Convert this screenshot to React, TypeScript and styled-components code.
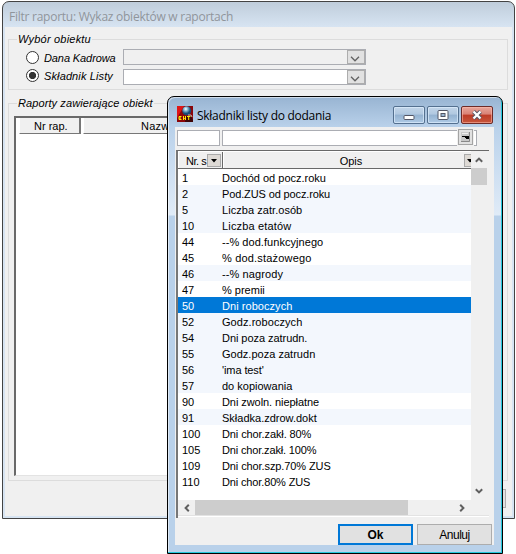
import React from "react";
import styled, { createGlobalStyle } from "styled-components";

const Global = createGlobalStyle`
  * { box-sizing: border-box; }
  body { margin: 0; background: #fff; overflow: hidden; }
  #root { font: 11px/16px "Liberation Sans", Arial, sans-serif; color: #000; }
`;

const Desktop = styled.main`
  position: relative;
  width: 516px;
  height: 554px;
  padding: 1px 0 0 2px;
  background: #fff;
  white-space: nowrap;
`;

const BackWindow = styled.section`
  width: 513px;
  height: 518px;
  border: 1px solid #434343;
  border-radius: 7px 7px 0 0;
  background: linear-gradient(#bfcddb 0, #d7e4f2 25px, #d7e4f2 100%);
  padding: 0 2px 2px;
  display: flex;
  flex-direction: column;
`;

const BackTitle = styled.header`
  height: 25px;
  padding: 2px 0 0 4px;
  font: 12px/25px "Open Sans", sans-serif;
  letter-spacing: -0.25px;
  color: #90959b;
`;

const BackBody = styled.div`
  flex: 1;
  min-height: 0;
  background: #f0f0f0;
  padding: 12px 4px 0 3px;
  display: flex;
  flex-direction: column;
`;

const Group = styled.fieldset<{ $height: number; $gap: number }>`
  margin: 0 0 ${(p) => p.$gap}px;
  padding: 9px 0 0 5px;
  min-width: 0;
  height: ${(p) => p.$height}px;
  border: 1px solid #dcdcdc;
`;

const Legend = styled.div<{ $spacing: number }>`
  width: fit-content;
  height: 16px;
  margin: -18px 0 0 3px;
  padding: 0 1px;
  background: #f0f0f0;
  font-style: italic;
  line-height: 16px;
  letter-spacing: ${(p) => p.$spacing}px;
`;

const OptionRow = styled.label`
  display: flex;
  align-items: center;
  height: 18px;
  margin-bottom: 2px;
  padding-left: 12px;
`;

const Options = styled.div`
  padding-top: 1px;
`;

const Radio = styled.span<{ $on?: boolean }>`
  width: 13px;
  height: 13px;
  margin-top: ${(p) => (p.$on ? -3 : 1)}px;
  border: 1px solid #333;
  border-radius: 50%;
  background: ${(p) => (p.$on ? "radial-gradient(circle, #333 0 3.2px, #fff 4px)" : "#fff")};
`;

const OptionText = styled.span<{ $spacing: number; $lift: number }>`
  width: 79px;
  margin: 0 0 ${(p) => p.$lift}px 5px;
  font-style: italic;
  letter-spacing: ${(p) => p.$spacing}px;
`;

const Combo = styled.span<{ $disabled?: boolean }>`
  display: flex;
  justify-content: flex-end;
  width: 243px;
  height: 16px;
  border: 1px solid #abadb3;
  background: ${(p) => (p.$disabled ? "#f0f0f0" : "#fff")};
`;

const ComboButton = styled.span`
  display: flex;
  align-items: center;
  justify-content: center;
  width: 18px;
  height: 14px;
  padding: 3px 2px 0 0;
  border: 1px solid #adadad;
  background: #e1e1e1;
`;

const ReportTable = styled.div`
  width: 489px;
  height: 360px;
  margin-top: 5px;
  border-top: 2px solid #696969;
  border-left: 2px solid #696969;
  border-bottom: 1px solid #e3e3e3;
  background: #fff;
`;

const ReportHeader = styled.div`
  display: flex;
  gap: 2px;
  height: 16px;
  padding-left: 3px;
`;

const ReportCell = styled.div<{ $width: number; $indent: number; $spacing: number }>`
  width: ${(p) => p.$width}px;
  padding-left: ${(p) => p.$indent}px;
  border: 1px solid #777;
  border-width: 0 2px 1px 1px;
  border-left-color: #fff;
  background: #f0f0f0;
  letter-spacing: ${(p) => p.$spacing}px;
`;

const BackButton = styled.span`
  align-self: flex-end;
  width: 75px;
  height: 19px;
  margin: 8px 2px 0 0;
  border: 1px solid #adadad;
  background: #e1e1e1;
`;

const Modal = styled.section`
  position: absolute;
  left: 167px;
  top: 96px;
  width: 336px;
  height: 458px;
  border: 1px solid #000;
  border-radius: 7px 7px 0 0;
  background: linear-gradient(#98b4d2 0, #b9d1ea 30px, #c6daef 58px, #e0ebf7 118px, #b9d1ea 119px);
  box-shadow: inset -1px -1px 0 #24c8dc, inset 1px 1px 0 rgba(255, 255, 255, 0.55);
  padding: 1px 8px 8px 7px;
  display: flex;
  flex-direction: column;
`;

const ModalTitle = styled.header`
  display: flex;
  align-items: flex-start;
  height: 29px;
  padding: 8px 1px 0 2px;
`;

const ModalName = styled.h1`
  flex: 1;
  margin: 0;
  padding: 1px 0 0 4px;
  font: 12px/17px "Open Sans", sans-serif;
  letter-spacing: -0.27px;
`;

const Caption = styled.span<{ $close?: boolean }>`
  display: flex;
  align-items: center;
  justify-content: center;
  width: 32px;
  height: 18px;
  margin-left: 2px;
  border: 1px solid ${(p) => (p.$close ? "#6d2b28" : "#54708f")};
  border-radius: 2px;
  background: ${(p) =>
    p.$close
      ? "linear-gradient(#e8a69b 0, #d98175 45%, #bd3a26 50%, #c7573d 100%)"
      : "linear-gradient(#c2d5e9 0, #b0c8e0 45%, #94b2d1 50%, #aecae5 100%)"};
  box-shadow: inset 0 0 0 1px ${(p) => (p.$close ? "rgba(255,190,175,.55)" : "rgba(225,240,255,.65)")};
`;

const ModalBody = styled.div`
  flex: 1;
  min-height: 0;
  background: #f0f0f0;
  padding: 3px 5px 0 1px;
`;

const Filters = styled.div`
  display: flex;
  height: 20px;
  padding-left: 1px;
`;

const FilterInput = styled.span<{ $width: number }>`
  display: flex;
  justify-content: flex-end;
  width: ${(p) => p.$width}px;
  height: 16px;
  margin-right: 2px;
  border: 1px solid #abadb3;
  background: #fff;
`;

const FilterButton = styled.span`
  width: 15px;
  height: 16px;
  margin: -2px 3px 0 0;
  border: 1px solid #a4a4a4;
  background: #e1e1e1;
  box-shadow: 0 0 0 1px #f0f0f0;
`;

const List = styled.div`
  width: 313px;
  height: 368px;
  border: solid #696969;
  border-width: 1px 0 0 2px;
  border-color: #696969 #e3e3e3 #e3e3e3 #777;
`;

const Upper = styled.div`
  display: grid;
  grid-template-columns: 293px 16px;
  height: 349px;
`;

const Rows = styled.div`
  background: #fff;
  overflow: hidden;
`;

const ListHeader = styled.div`
  display: flex;
  height: 18px;
  border-top: 1px solid #fff;
  border-bottom: 1px solid #696969;
  background: #f0f0f0;
`;

const HeadCell = styled.div<{ $grow?: boolean }>`
  display: flex;
  ${(p) => (p.$grow ? "flex: 1; padding-left: 14px;" : "width: 45px; padding-left: 7px;")}
  border-left: 1px solid #fff;
  border-right: ${(p) => (p.$grow ? "0" : "1px solid #696969")};
  line-height: 18px;
`;

const HeadText = styled.span<{ $grow?: boolean }>`
  ${(p) => (p.$grow ? "flex: 1; text-align: center;" : "width: 21px; letter-spacing: -0.45px;")}
`;

const DropButton = styled.span<{ $cut?: boolean }>`
  display: flex;
  flex: none;
  align-items: center;
  justify-content: ${(p) => (p.$cut ? "flex-start" : "center")};
  overflow: hidden;
  width: ${(p) => (p.$cut ? 7 : 14)}px;
  height: 13px;
  margin-top: 2px;
  padding-left: ${(p) => (p.$cut ? 2 : 0)}px;
  border: 1px solid #aaa;
  border-right-width: ${(p) => (p.$cut ? 0 : 1)}px;
  background: #dedad5;
`;

const Row = styled.div<{ $tone: string }>`
  display: grid;
  grid-template-columns: 40px 1fr;
  height: 16px;
  padding-left: 4px;
  line-height: 18px;
  background: ${(p) => ({ w: "#fff", b: "#f3f7fd", s: "#0078d7" })[p.$tone]};
  color: ${(p) => (p.$tone === "s" ? "#fff" : "#000")};
`;

const Cell = styled.span<{ $spacing?: number }>`
  letter-spacing: ${(p) => p.$spacing ?? 0}px;
`;

const VScroll = styled.div`
  display: flex;
  flex-direction: column;
  align-items: center;
  justify-content: space-between;
  padding: 5px 0;
  background: linear-gradient(#f0f0f0 17px, #cdcdcd 17px 34px, #f0f0f0 34px);
`;

const HScroll = styled.div`
  display: flex;
  align-items: center;
  justify-content: space-between;
  width: 293px;
  height: 15px;
  padding: 0 5px;
  background: linear-gradient(90deg, #f0f0f0 17px, #cdcdcd 17px 230px, #f0f0f0 230px);
`;

const ListEdge = styled.div`
  width: 311px;
  height: 2px;
  border-top: 1px solid #e3e3e3;
  background: #fff;
`;

const Actions = styled.footer`
  display: flex;
  justify-content: flex-end;
  gap: 4px;
  padding: 6px 0 0;
  margin-right: -3px;
`;

const Button = styled.button<{ $primary?: boolean }>`
  width: 75px;
  height: 21px;
  padding: 1px 0 0;
  border: ${(p) => (p.$primary ? "2px solid #0078d7" : "1px solid #adadad")};
  background: #e1e1e1;
  color: #000;
  font: ${(p) => (p.$primary ? "bold 12px" : "12px")}/16px "Liberation Sans", Arial, sans-serif;
  letter-spacing: ${(p) => (p.$primary ? 0 : -0.5)}px;
`;

const Chevron = ({ turn = 0, wide = 8, weight = 2 }) => (
  <svg width={wide} height={wide} viewBox="0 0 8 8" fill="none" stroke="#606060" strokeWidth={weight}>
    <path d="M0.8 2.2 4 5.4 7.2 2.2" transform={`rotate(${turn} 4 4)`} />
  </svg>
);

const Triangle = styled.svg`
  flex: none;
`;

const Arrow = () => (
  <Triangle width="6" height="4">
    <path d="M0 0h6L3 3.5z" fill="#000" />
  </Triangle>
);

const AppIcon = () => (
  <svg width="16" height="16" viewBox="0 0 16 16">
    <defs>
      <radialGradient id="globe" cx="40%" cy="30%">
        <stop offset="0" stopColor="#fff" />
        <stop offset=".45" stopColor="#83b6d2" />
        <stop offset="1" stopColor="#174a75" />
      </radialGradient>
    </defs>
    <rect width="16" height="16" fill="#8c0508" />
    <path d="M0 0h7L0 12z" fill="#df1616" />
    <path d="M9 10h5l2 4v2H8z" fill="#3d0508" />
    <circle cx="9.7" cy="4.8" r="4.5" fill="url(#globe)" />
    <path d="M11 9h3l1 2" stroke="#bbb" fill="none" />
    <path
      d="M4.5 10.5h-2.5v3h2.5M2 12h2M6.5 14v-4M6 11l1.5 1.5L9 11M8.5 10v4M10 10.5h3.5M11.7 10.5V14"
      fill="none"
      stroke="#ffef00"
    />
  </svg>
);

type Entry = [string, string, string, number];

const entries: Entry[] = [
  ["1", "Dochód od pocz.roku", "w", 0],
  ["2", "Pod.ZUS od pocz.roku", "b", -0.13],
  ["5", "Liczba zatr.osób", "b", 0.05],
  ["10", "Liczba etatów", "b", 0.17],
  ["44", "--% dod.funkcyjnego", "w", 0.05],
  ["45", "% dod.stażowego", "w", 0.18],
  ["46", "--% nagrody", "b", 0.1],
  ["47", "% premii", "w", 0],
  ["50", "Dni roboczych", "s", 0.05],
  ["52", "Godz.roboczych", "b", 0.06],
  ["54", "Dni poza zatrudn.", "b", -0.05],
  ["55", "Godz.poza zatrudn", "b", 0.02],
  ["56", "'ima test'", "b", -0.1],
  ["57", "do kopiowania", "b", 0],
  ["90", "Dni zwoln. niepłatne", "w", -0.07],
  ["91", "Składka.zdrow.dokt", "b", 0],
  ["100", "Dni chor.zakł. 80%", "w", -0.1],
  ["105", "Dni chor.zakł. 100%", "w", -0.15],
  ["109", "Dni chor.szp.70% ZUS", "w", -0.1],
  ["110", "Dni chor.80% ZUS", "w", -0.14],
];

export default function App() {
  return (
    <Desktop>
      <Global />
      <BackWindow>
        <BackTitle>Filtr raportu: Wykaz obiektów w raportach</BackTitle>
        <BackBody>
          <Group $height={51} $gap={13}>
            <Legend $spacing={0.2}>Wybór obiektu</Legend>
            <Options>
              <OptionRow>
                <Radio />
                <OptionText $spacing={-0.1} $lift={-1}>Dana Kadrowa</OptionText>
                <Combo $disabled>
                  <ComboButton><Chevron wide={10} weight={1} /></ComboButton>
                </Combo>
              </OptionRow>
              <OptionRow>
                <Radio $on />
                <OptionText $spacing={0.12} $lift={2}>Składnik Listy</OptionText>
                <Combo>
                  <ComboButton><Chevron wide={10} weight={1} /></ComboButton>
                </Combo>
              </OptionRow>
            </Options>
          </Group>
          <Group $height={378} $gap={0}>
            <Legend $spacing={0.1}>Raporty zawierające obiekt</Legend>
            <ReportTable>
              <ReportHeader>
                <ReportCell $width={62} $indent={14} $spacing={0}>Nr rap.</ReportCell>
                <ReportCell $width={418} $indent={57} $spacing={0.2}>Nazwa</ReportCell>
              </ReportHeader>
            </ReportTable>
          </Group>
          <BackButton />
        </BackBody>
      </BackWindow>

      <Modal>
        <ModalTitle>
          <AppIcon />
          <ModalName>Składniki listy do dodania</ModalName>
          <Caption>
            <svg width="12" height="10"><rect x="1" y="5.5" width="10" height="4" rx="1" fill="#fff" stroke="#535666" /></svg>
          </Caption>
          <Caption>
            <svg width="12" height="10">
              <rect x="1" y=".5" width="10" height="9" rx="1" fill="#fff" stroke="#535666" />
              <rect x="4" y="3.5" width="4" height="3" fill="#9cb8d5" stroke="#535666" />
            </svg>
          </Caption>
          <Caption $close>
            <svg width="12" height="10" fill="none">
              <path d="M2.5 1.5 9.5 8.5M9.5 1.5 2.5 8.5" stroke="#535666" strokeWidth="4" />
              <path d="M2.5 1.5 9.5 8.5M9.5 1.5 2.5 8.5" stroke="#fff" strokeWidth="2.3" />
            </svg>
          </Caption>
        </ModalTitle>
        <ModalBody>
          <Filters>
            <FilterInput $width={43} />
            <FilterInput $width={255}>
              <FilterButton>
                <svg width="13" height="14">
                  <path d="M2 2h9v10H2z" fill="#c8c8c8" />
                  <path d="M2 11.5h8.5V2" fill="none" stroke="#888" />
                  <path d="M3 6h7v3H7V8H6V7H3z" fill="#000" />
                  <path d="M3 3.5h6" stroke="#eee" />
                </svg>
              </FilterButton>
            </FilterInput>
          </Filters>
          <List>
            <Upper>
              <Rows>
                <ListHeader>
                  <HeadCell>
                    <HeadText>Nr. s</HeadText>
                    <DropButton><Arrow /></DropButton>
                  </HeadCell>
                  <HeadCell $grow>
                    <HeadText $grow>Opis</HeadText>
                    <DropButton $cut><Arrow /></DropButton>
                  </HeadCell>
                </ListHeader>
                {entries.map(([id, name, tone, spacing]) => (
                  <Row key={id} $tone={tone}>
                    <Cell>{id}</Cell>
                    <Cell $spacing={spacing}>{name}</Cell>
                  </Row>
                ))}
              </Rows>
              <VScroll>
                <Chevron turn={180} />
                <Chevron />
              </VScroll>
            </Upper>
            <HScroll>
              <Chevron turn={90} />
              <Chevron turn={-90} />
            </HScroll>
            <ListEdge />
          </List>
          <Actions>
            <Button $primary>Ok</Button>
            <Button>Anuluj</Button>
          </Actions>
        </ModalBody>
      </Modal>
    </Desktop>
  );
}
